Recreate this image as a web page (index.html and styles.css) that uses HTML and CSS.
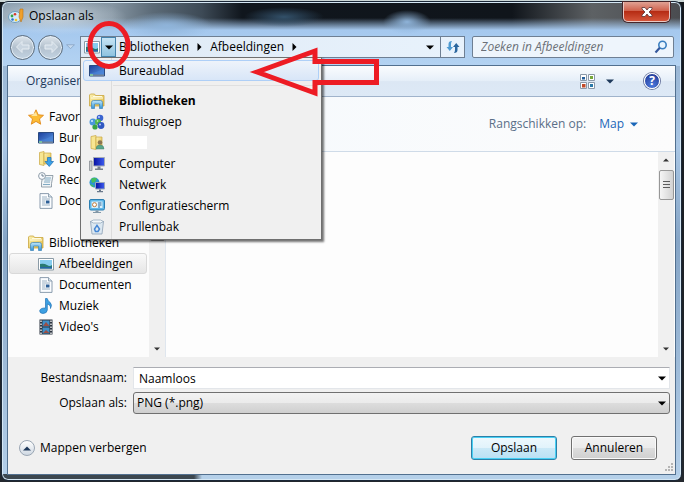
FILE: index.html
```html
<!DOCTYPE html>
<html lang="nl">
<head>
  <meta charset="utf-8">
  <title>Opslaan als</title>
  <link rel="stylesheet" href="styles.css">
</head>

<body>
  <svg class="symbols" aria-hidden="true">
    <defs>
      <linearGradient id="g-folder" x1="0" y1="0" x2="1" y2="1">
        <stop offset="0" stop-color="#fdf3b4"/><stop offset="1" stop-color="#e2b93e"/>
      </linearGradient>
      <linearGradient id="g-blue" x1="0" y1="0" x2="1" y2="1">
        <stop offset="0" stop-color="#1c3f9c"/><stop offset="1" stop-color="#5b9be6"/>
      </linearGradient>
      <linearGradient id="g-sky" x1="0" y1="0" x2="0" y2="1">
        <stop offset="0" stop-color="#bfe6fb"/><stop offset="1" stop-color="#2f93d6"/>
      </linearGradient>
      <linearGradient id="g-screen" x1="0" y1="0" x2="1" y2="0">
        <stop offset="0" stop-color="#0610a0"/><stop offset="1" stop-color="#3d5df0"/>
      </linearGradient>
    </defs>
    <symbol id="i-paint" viewBox="0 0 16 16">
      <ellipse cx="7" cy="9" rx="6.5" ry="5.5" fill="#d4ebf8" stroke="#6f9fc0"/>
      <circle cx="4" cy="8" r="1.4" fill="#37a345"/><circle cx="7" cy="6.300" r="1.300" fill="#d93b2b"/>
      <circle cx="4.500" cy="11.500" r="1.300" fill="#2a6fd0"/><circle cx="8" cy="12" r="1.300" fill="#f0c22c"/>
      <path d="M12 1h3v8l-2 5-2-5z" fill="#f0a02c" stroke="#b8731a" stroke-width=".6"/>
    </symbol>
    <symbol id="i-desktop" viewBox="0 0 16 16">
      <path d="M.5 2.500h15v10.500H.5z" fill="url(#g-blue)" stroke="#2a4a80"/>
      <path d="M1 10c4 0 8-1 14-5v7H1z" fill="#4b86d8" opacity=".6"/>
      <path d="M1 11.500h14v1.500H1z" fill="#6f8096"/><path d="M1 11h3v2H1z" fill="#7cc0a0"/>
    </symbol>
    <symbol id="i-library" viewBox="0 0 16 16">
      <path d="M.5 13V2l1-1h4l1 1.500h8.500V13z" fill="url(#g-folder)" stroke="#c9a640" stroke-width=".8"/>
      <path d="M2 5h12M4 3.500h9" stroke="#fffbe0"/>
      <path d="M2.500 15.500V9.500q0-2 2-2h7q2 0 2 2v6h-3v-4.500H5.500v4.500z" fill="url(#g-sky)" stroke="#3d84b8" stroke-width=".7"/>
    </symbol>
    <symbol id="i-homegroup" viewBox="0 0 16 16">
      <circle cx="11" cy="4" r="3.300" fill="#3a64d0"/><circle cx="4" cy="8" r="3.500" fill="#4b97dc"/>
      <circle cx="9" cy="8" r="3" fill="#54b949"/><circle cx="6" cy="13" r="2.600" fill="#38a244"/>
      <circle cx="12" cy="11.500" r="3.400" fill="#2f58c2"/>
      <circle cx="10" cy="3" r="1" fill="#b9d0ff"/><circle cx="3" cy="7" r="1" fill="#d3ecff"/>
      <circle cx="11" cy="10.500" r="1" fill="#b9d0ff"/><circle cx="8.500" cy="7" r=".8" fill="#d5f6c8"/>
    </symbol>
    <symbol id="i-user" viewBox="0 0 16 16">
      <path d="M2 1.500 7 .5v14l-5-1z" fill="#f7e692" stroke="#c9a640" stroke-width=".7"/>
      <path d="M7 2h6v11H7z" fill="url(#g-folder)" stroke="#c9a640" stroke-width=".7"/>
      <circle cx="11" cy="7.500" r="2.300" fill="#8b7451"/><path d="M7 14q0-4 4-4t4 4z" fill="#58a68a" stroke="#47816c" stroke-width=".5"/>
    </symbol>
    <symbol id="i-computer" viewBox="0 0 16 16">
      <path d="M.5 5h2.500v9.500H.5z" fill="#c8ccd0" stroke="#7d8388" stroke-width=".7"/>
      <path d="M4.500 1.500h11v8.500h-11z" fill="url(#g-screen)" stroke="#a7adb5"/>
      <path d="M8.500 10.500h3v2h-3zM6 12.500h8v1.500H6z" fill="#77808c"/>
    </symbol>
    <symbol id="i-network" viewBox="0 0 16 16">
      <circle cx="5.500" cy="5.500" r="5" fill="#2a94d2"/><path d="M2 2q3-2 6-.5L6 5 3 6zM1 7l3 1 1 2.500Q2 10 1 7z" fill="#46bd5c"/>
      <path d="M6.500 5.500h9v6.500h-9z" fill="url(#g-screen)" stroke="#9ba8bb"/>
      <path d="M10 12.500h2v1.500h-2zM8 14h6v1.200H8z" fill="#69788a"/>
    </symbol>
    <symbol id="i-control" viewBox="0 0 16 16">
      <rect x=".5" y="1.500" width="15" height="10.500" rx="1.500" fill="#5fb6e8" stroke="#2c7fb2"/>
      <path d="M2.500 3.500h11V10h-11z" fill="#d9f1fc"/>
      <circle cx="5.500" cy="6.700" r="2" fill="#fff" stroke="#c07b3d"/><path d="M9 5h3.500M9 7h3.500M9 9h2" stroke="#2464a0"/>
      <path d="M6.500 12.500h3V14h-3zM4 14h8v1H4z" fill="#8398a8"/>
    </symbol>
    <symbol id="i-bin" viewBox="0 0 16 16">
      <path d="M1.500 2.500h13L13 15H3z" fill="#dce8f1" stroke="#8ba0b5" stroke-width=".8"/>
      <path d="m1.500 2.500 3-1.500h7l3 1.500-3 1.500h-7z" fill="#f4f8fb" stroke="#8ba0b5" stroke-width=".7"/>
      <path d="M8 6.300 10.500 10 9 12.500H6.500L5.500 10z" fill="none" stroke="#4586d4" stroke-width="1.500"/>
    </symbol>
    <symbol id="i-star" viewBox="0 0 16 16">
      <path d="m8 .8 2.200 5 5.300.5-4 3.600 1.200 5.300L8 12.400l-4.700 2.800 1.200-5.300-4-3.600 5.300-.5z" fill="#fcbc35" stroke="#e18a1c" stroke-width=".9"/>
      <path d="m8 3 1.300 4H3z" fill="#ffe59a"/>
    </symbol>
    <symbol id="i-download" viewBox="0 0 16 16">
      <path d="M1.500 1.500 6 .5v14l-4.500-1z" fill="#f7e692" stroke="#c9a640" stroke-width=".7"/>
      <path d="M6 2h7v11H6z" fill="url(#g-folder)" stroke="#c9a640" stroke-width=".7"/>
      <path d="M9.500 6.500h3.500v4h2.500l-4.250 5L7 10.500h2.500z" fill="#3ba1e8" stroke="#1e70b6" stroke-width=".7"/>
    </symbol>
    <symbol id="i-recent" viewBox="0 0 16 16">
      <path d="M5 3.500h10l-1.500 8V15H3.500v-4.500z" fill="#f1f4f6" stroke="#7e8d99" stroke-width=".8"/>
      <path d="M7 6h6M6.500 8h6M6 10h6M5 12.500h7" stroke="#74a1bd" stroke-width=".9"/>
      <circle cx="4" cy="4" r="3.400" fill="#fafcff" stroke="#8e9ca8"/><path d="M4 2v2h2" fill="none" stroke="#526879" stroke-width=".8"/>
    </symbol>
    <symbol id="i-document" viewBox="0 0 16 16">
      <path d="M2 .6h8.500L14 4v11.400H2z" fill="#fbfdff" stroke="#7f92a5" stroke-width=".9"/>
      <path d="M10.500.6V4H14" fill="#d9e4ec" stroke="#7f92a5" stroke-width=".8"/>
      <path d="M4 4h5M4 6h8M4 8h3.500M4 10h3.500M4 12h8" stroke="#8fa7bb" stroke-width=".9"/><path d="M8 7.500h3.500v3H8z" fill="#2d5f96"/>
    </symbol>
    <symbol id="i-picture" viewBox="0 0 16 16">
      <path d="M.5 2.500h15v11.500H.5z" fill="#fff" stroke="#8b9ba6"/>
      <path d="M2 4h12v8.500H2z" fill="#87cdef"/><path d="M2 8q4-1 7 1t5 0v3.500H2z" fill="#2a7b72"/><path d="M2 11h12v1.500H2z" fill="#2765a7"/>
    </symbol>
    <symbol id="i-music" viewBox="0 0 16 16">
      <path d="M7.500.5h1.700q.5 2.500 3 4 2.300 2.500.3 6 .5-3.500-3.200-4.500v6q-.2 3.300-4.300 3.500-3.500-.2-3.300-2.700.6-3 5.800-2.800z" fill="#3da0e2" stroke="#2272b6" stroke-width=".7"/>
    </symbol>
    <symbol id="i-video" viewBox="0 0 16 16">
      <path d="M1.500.5h13v15h-13z" fill="#2c3540"/><path d="M4.500 1.500h7v6h-7zM4.500 8.500h7v6h-7z" fill="#3f8fc8"/>
      <path d="m5 7 3-4 3.500 4zM5 14l3-3 3.500 3z" fill="#9b4f45"/>
      <path d="M3 1.500v14M13 1.500v14" stroke="#fff" stroke-width="1.300" stroke-dasharray="1.500 1.500"/>
    </symbol>
    <symbol id="i-down" viewBox="0 0 8 5">
      <path d="M0 .5h8L4 4.500z" fill="currentColor"/>
    </symbol>
    <symbol id="i-right" viewBox="0 0 5 8">
      <path d="M.5 0v8l4-4z" fill="currentColor"/>
    </symbol>
  </svg>

  <main class="window">
    <header class="titlebar">
      <svg class="icon"><use href="#i-paint"/></svg>
      <h1>Opslaan als</h1>
      <button class="close" type="button" aria-label="Sluiten">
        <svg viewBox="0 0 12 10"><path d="M1 .5h3L6 3 8 .5h3v1.500L8 5l3 3v1.500H8L6 7 4 9.500H1V8l3-3-3-3z" fill="#fff" stroke="#5b3436" stroke-width=".8"/></svg>
      </button>
    </header>

    <div class="navbar">
      <button class="round" type="button" aria-label="Terug">
        <svg viewBox="0 0 16 16"><path d="M7 2.500 1.500 8 7 13.500V10h7V6H7z"/></svg>
      </button>
      <button class="round" type="button" aria-label="Vooruit">
        <svg viewBox="0 0 16 16"><path d="M9 2.500 14.500 8 9 13.500V10H2V6h7z"/></svg>
      </button>
      <svg class="recent-arrow" viewBox="0 0 8 5"><path d="M.5.5h7L4 4z" fill="#c5daef" stroke="#8aa6c6" stroke-width=".8"/></svg>

      <div class="address">
        <svg class="icon"><use href="#i-picture"/></svg>
        <button class="places" type="button" aria-label="Locaties"><svg class="down"><use href="#i-down"/></svg></button>
        <a href="#">Bibliotheken</a>
        <svg class="right"><use href="#i-right"/></svg>
        <a href="#">Afbeeldingen</a>
        <svg class="right"><use href="#i-right"/></svg>
        <button class="history" type="button" aria-label="Vorige locaties"><svg class="down"><use href="#i-down"/></svg></button>
        <button class="refresh" type="button" aria-label="Vernieuwen">
          <svg viewBox="0 0 14 14"><path d="M6 1Q2.500 1 2.500 4v3H.5l3.300 4L7 7H5V4q0-1.500 1-3z" fill="#4f9bd2"/><path d="M8 13q3.500 0 3.500-3V7h2l-3.300-4L7 7h2v3q0 1.500-1 3z" fill="#2b669e"/></svg>
        </button>

        <ul class="menu">
          <li class="active"><a href="#"><svg class="icon"><use href="#i-desktop"/></svg>Bureaublad</a></li>
          <li class="separator"></li>
          <li class="current"><a href="#"><svg class="icon"><use href="#i-library"/></svg>Bibliotheken</a></li>
          <li><a href="#"><svg class="icon"><use href="#i-homegroup"/></svg>Thuisgroep</a></li>
          <li><a href="#" aria-label="Gebruiker"><svg class="icon"><use href="#i-user"/></svg><span class="blank"></span></a></li>
          <li><a href="#"><svg class="icon"><use href="#i-computer"/></svg>Computer</a></li>
          <li><a href="#"><svg class="icon"><use href="#i-network"/></svg>Netwerk</a></li>
          <li><a href="#"><svg class="icon"><use href="#i-control"/></svg>Configuratiescherm</a></li>
          <li><a href="#"><svg class="icon"><use href="#i-bin"/></svg>Prullenbak</a></li>
        </ul>
      </div>

      <div class="search">
        <input type="search" placeholder="Zoeken in Afbeeldingen" aria-label="Zoeken in Afbeeldingen">
        <svg viewBox="0 0 14 14"><circle cx="8.500" cy="5" r="3.700" fill="#e8f5ff" stroke="#3b7fc0" stroke-width="1.600"/><path d="M5.800 7.800 1.500 12.500" stroke="#35589c" stroke-width="2.200"/></svg>
      </div>
    </div>

    <div class="client">
      <div class="toolbar">
        <button type="button">Organiseren</button>
        <button class="view" type="button" aria-label="Weergave">
          <svg class="tiles" viewBox="0 0 15 15">
            <path d="M.5.5h6v6h-6zM8.500.5h6v6h-6zM.5 8.500h6v6h-6zM8.500 8.500h6v6h-6z" fill="#fff" stroke="#8a98a8"/>
            <path d="M2 3h3v2.500H2z" fill="#245f9c"/><path d="M10 2h3v3h-3z" fill="#76a83b"/><path d="M2 10h3.500v3.500H2z" fill="#c34a28"/><path d="M10 10h3v3h-3z" fill="#2b79a8"/>
          </svg>
          <svg class="down"><use href="#i-down"/></svg>
        </button>
        <button class="help" type="button" aria-label="Help">?</button>
      </div>

      <div class="panes">
        <nav class="sidebar">
          <a class="group" href="#"><svg class="icon"><use href="#i-star"/></svg>Favorieten</a>
          <a href="#"><svg class="icon"><use href="#i-desktop"/></svg>Bureaublad</a>
          <a href="#"><svg class="icon"><use href="#i-download"/></svg>Downloads</a>
          <a href="#"><svg class="icon"><use href="#i-recent"/></svg>Recent</a>
          <a href="#"><svg class="icon"><use href="#i-document"/></svg>Documenten</a>
          <a class="group" href="#"><svg class="icon"><use href="#i-library"/></svg>Bibliotheken</a>
          <a class="selected" href="#"><svg class="icon"><use href="#i-picture"/></svg>Afbeeldingen</a>
          <a href="#"><svg class="icon"><use href="#i-document"/></svg>Documenten</a>
          <a href="#"><svg class="icon"><use href="#i-music"/></svg>Muziek</a>
          <a href="#"><svg class="icon"><use href="#i-video"/></svg>Video's</a>
        </nav>
        <div class="scrollbar side">
          <span class="thumb"></span>
          <svg class="down"><use href="#i-down"/></svg>
        </div>
        <section class="content">
          <div class="arrange">
            <span>Rangschikken op:</span>
            <button type="button">Map <svg class="down"><use href="#i-down"/></svg></button>
          </div>
          <div class="files">
            <div class="scrollbar">
              <svg class="down up"><use href="#i-down"/></svg>
              <span class="thumb"><i></i></span>
              <svg class="down"><use href="#i-down"/></svg>
            </div>
          </div>
        </section>
      </div>

      <form class="footer">
        <div class="field">
          <label for="filename">Bestandsnaam:</label>
          <div class="combo">
            <input id="filename" type="text" value="Naamloos">
            <svg class="down"><use href="#i-down"/></svg>
          </div>
        </div>
        <div class="field">
          <label for="filetype">Opslaan als:</label>
          <div class="combo">
            <select id="filetype"><option>PNG (*.png)</option></select>
            <svg class="down"><use href="#i-down"/></svg>
          </div>
        </div>
        <div class="actions">
          <button class="hide" type="button"><span class="disc"><svg class="down up"><use href="#i-down"/></svg></span>Mappen verbergen</button>
          <button class="push default" type="button">Opslaan</button>
          <button class="push" type="button">Annuleren</button>
        </div>
        <svg class="grip" viewBox="0 0 9 9"><path d="M7 1h2M4 4h2M7 4h2M1 7h2M4 7h2M7 7h2" stroke="#b5b5b5" stroke-width="2"/></svg>
      </form>
    </div>
  </main>

  <!-- red marks drawn over the dialog -->
  <svg class="marks" width="400" height="110" aria-hidden="true">
    <ellipse cx="109" cy="45" rx="19" ry="21.500"/>
    <path d="M257 72 315 51V61.500H376.500V82.500H315V93z"/>
  </svg>
</body>
</html>
```

FILE: styles.css
```css
* {
  box-sizing: border-box;
}

body {
  margin: 0;
  padding: 1px 2px 1px 1px;
  min-height: 100vh;
  display: flex;
  background: linear-gradient(#cbd6d6 2px, #14181d 2px, #23282e);
  font: 12px/20px "Open Sans", "Noto Sans", sans-serif;
  color: #000;
}

button, input, select {
  font: inherit;
  color: inherit;
  margin: 0;
  padding: 0;
  border: 0;
  background: none;
}

a {
  color: inherit;
  text-decoration: none;
}

svg {
  display: block;
  flex: none;
}

.symbols {
  position: absolute;
  width: 0;
  height: 0;
}

.icon {
  width: 16px;
  height: 16px;
}

.down {
  width: 8px;
  height: 5px;
}

.up {
  transform: rotate(180deg);
}

.right {
  width: 5px;
  height: 8px;
}

.window {
  flex: 1;
  display: flex;
  flex-direction: column;
  padding: 0 5px 5px;
  border: 1px solid #1b2838;
  border-radius: 7px;
  box-shadow: inset 0 0 0 1px #d5e7f4;
  background:
    radial-gradient(ellipse 70px 18px at 55px 15px, rgba(215, 226, 235, .8), transparent) no-repeat,
    radial-gradient(ellipse 45px 14px at 165px 24px, #8fb4da, transparent) no-repeat,
    radial-gradient(ellipse 24px 12px at 405px 20px, #8fb4da, transparent) no-repeat,
    radial-gradient(ellipse 40px 10px at 282px 15px, #33516a, transparent) no-repeat,
    linear-gradient(to bottom, transparent 16px, #a5c8ee 28px, #b4d3f2 64px, transparent 64px),
    linear-gradient(to right, #8fa2b2 0, #8595a2 110px, #5c6b78 150px, #3d4a56 200px, #10161d 240px, #10151b 510px, #5d6164 590px, #4a4c50) top / 100% 40px no-repeat,
    linear-gradient(to right, #3c474f 192px, #b5d0e9 200px) bottom / 100% 6px no-repeat,
    linear-gradient(#8fabc9, #a9c6e4 30%, #86a5c6 50%, #b4cfe9);
}

/* title bar */
.titlebar {
  height: 32px;
  padding: 0 6px 4px 1px;
  display: flex;
  align-items: center;
  gap: 5px;
}

.titlebar h1 {
  flex: 1;
  margin: 0;
  font-size: 12px;
  font-weight: normal;
}

.close {
  align-self: flex-start;
  width: 47px;
  height: 20px;
  display: flex;
  align-items: center;
  justify-content: center;
  border: 1px solid #e9c9c4;
  border-top: 0;
  border-radius: 0 0 5px 5px;
  background: linear-gradient(#e0a294, #cf5f4a 48%, #b62c14 50%, #d4553a);
  box-shadow: 0 0 0 1px #47262a;
}

.close svg {
  width: 12px;
  height: 10px;
}

/* address and search */
.navbar {
  display: flex;
  align-items: center;
  height: 31px;
  padding: 0 2px 5px 3px;
}

.round {
  width: 25px;
  height: 25px;
  flex: none;
  margin-right: 3px;
  display: flex;
  align-items: center;
  justify-content: center;
  border: 1px solid #5c6c7c;
  border-radius: 50%;
  background: linear-gradient(#dfe6ec, #b3c1ce 50%, #c3d3e2);
  box-shadow: inset 0 0 0 1px #e3edf6;
}

.round svg {
  width: 16px;
  height: 16px;
  fill: #c9d5e0;
  stroke: #e6edf3;
}

.recent-arrow {
  width: 9px;
  height: 6px;
  margin-right: 5px;
}

.address {
  flex: 1;
  height: 22px;
  position: relative;
  display: flex;
  align-items: center;
  padding-left: 3px;
  border: 1px solid #6e7f93;
  background: linear-gradient(to right, #dfeaf5, #e8f2fc);
}

.address > .right {
  margin: 0 8px;
}

.places {
  width: 15px;
  height: 20px;
  margin: 0 3px 0 1px;
  display: flex;
  align-items: center;
  justify-content: center;
  border: 1px solid #4584ad;
  background: linear-gradient(#c6e4f5, #8fc3e0);
}

.history {
  margin-left: auto;
  padding: 0 6px;
}

.refresh {
  width: 24px;
  height: 20px;
  display: flex;
  align-items: center;
  justify-content: center;
  border-left: 1px solid #6e7f93;
}

.refresh svg {
  width: 14px;
  height: 14px;
}

.search {
  width: 202px;
  height: 22px;
  margin-left: 7px;
  padding: 0 5px 0 8px;
  display: flex;
  align-items: center;
  border: 1px solid #6e7f93;
  border-radius: 2px;
  background: #eef5fc;
}

.search input {
  flex: 1;
  min-width: 0;
  outline: 0;
}

.search input::placeholder {
  color: #6b7077;
  font-style: italic;
}

.search svg {
  width: 14px;
  height: 14px;
}

/* drop-down list under the address bar */
.menu {
  position: absolute;
  z-index: 1;
  top: 20px;
  left: -1px;
  width: 242px;
  margin: 0;
  padding: 2px;
  list-style: none;
  border: 1px solid #6f6f6f;
  background: linear-gradient(to right, #f0f0f0 30px, #dcdcdc 30px, #dcdcdc 31px, #f0f0f0 31px);
  box-shadow: 2px 2px 2px rgba(0, 0, 0, .55);
}

.menu a {
  height: 21px;
  display: flex;
  align-items: center;
  gap: 14px;
  padding-left: 6px;
}

.menu .active a {
  border: 1px solid #aecff7;
  border-radius: 3px;
  padding-left: 5px;
  background: linear-gradient(#eef3fa, #d8e6f8);
}

.menu .separator {
  height: 1px;
  margin: 4px 0 4px 30px;
  background: #e0e0e0;
}

.menu .current {
  font-weight: bold;
}

.menu .blank {
  width: 30px;
  height: 13px;
  margin-left: -2px;
  background: #fff;
}

/* client area */
.client {
  flex: 1;
  display: flex;
  flex-direction: column;
  border: 1px solid #52708f;
  background: #f0f0f0;
}

.toolbar {
  height: 31px;
  display: flex;
  align-items: center;
  padding: 0 15px 0 18px;
  color: #1e395b;
  border-bottom: 1px solid #a0b3cb;
  background: linear-gradient(#fafcfe, #e6eff9 48%, #dce7f4 52%, #dde9f6);
}

.view {
  margin-left: auto;
  display: flex;
  align-items: center;
  gap: 11px;
}

.tiles {
  width: 15px;
  height: 15px;
}

.help {
  width: 16px;
  height: 16px;
  margin-left: 30px;
  font-size: 12px;
  font-weight: bold;
  line-height: 12px;
  color: #fff;
  border: 1px solid #fff;
  border-radius: 50%;
  background: radial-gradient(circle at 50% 80%, #4d79dc, #1c338f);
  box-shadow: 0 0 0 1px #6e7ba2;
}

.panes {
  flex: 1;
  display: flex;
  background: #fcfcfc;
}

.sidebar {
  width: 141px;
  padding: 9px 2px 0 1px;
}

.sidebar a {
  height: 21px;
  display: flex;
  align-items: center;
  gap: 5px;
  padding-left: 28px;
  border: 1px solid transparent;
  border-radius: 3px;
}

.sidebar .group {
  padding-left: 18px;
}

.sidebar a + .group {
  margin-top: 21px;
}

.sidebar .selected {
  border-color: #d9d9d9;
  background: linear-gradient(#f9f9f9, #e6e6e6);
}

.scrollbar {
  width: 16px;
  padding: 6px 0;
  display: flex;
  flex-direction: column;
  align-items: center;
  color: #333;
  background: #f0f0f0;
}

.scrollbar .down {
  width: 6px;
  height: 4px;
  margin-top: auto;
}

.scrollbar .up {
  margin-top: 0;
}

.thumb {
  width: 15px;
  height: 30px;
  margin-top: 8px;
  display: flex;
  align-items: center;
  justify-content: center;
  border: 1px solid #979797;
  border-radius: 2px;
  background: linear-gradient(to right, #f5f5f5, #d2d2d2);
}

.thumb i {
  width: 7px;
  height: 8px;
  background: repeating-linear-gradient(#5c5c5c 0 1px, transparent 1px 3px);
}

.side .thumb {
  height: 130px;
}

.content {
  flex: 1;
  display: flex;
  flex-direction: column;
  border-left: 1px solid #dfe6ee;
}

.arrange {
  height: 55px;
  display: flex;
  align-items: center;
  justify-content: flex-end;
  gap: 13px;
  padding-right: 37px;
  color: #5a6f88;
  border-bottom: 1px solid #cfdbe8;
  background: linear-gradient(to right, #f5f9fd, #fcfcfc);
}

.arrange button {
  display: flex;
  align-items: center;
  gap: 6px;
  color: #1a66b8;
}

.files {
  flex: 1;
  display: flex;
  justify-content: flex-end;
  padding-right: 1px;
  background: #fdfdfd;
}

/* file name, type and buttons */
.footer {
  position: relative;
  padding: 10px 5px 14px;
}

.field {
  display: flex;
  align-items: center;
  margin-bottom: 3px;
}

.field label {
  width: 114px;
  margin-right: 6px;
  text-align: right;
}

.combo {
  flex: 1;
  display: flex;
  align-items: center;
  position: relative;
}

.combo input,
.combo select {
  width: 100%;
  height: 22px;
  appearance: none;
  outline: 0;
}

.combo input {
  padding: 0 5px;
  border: 1px solid #e3e6ea;
  border-top-color: #abadb3;
  background: #fff;
}

.combo select {
  padding: 0 3px;
  border: 1px solid #707070;
  border-radius: 3px;
  background: linear-gradient(#f2f2f2, #ebebeb 48%, #dddddd 50%, #cfcfcf);
}

.combo .down {
  position: absolute;
  right: 4px;
}

.actions {
  display: flex;
  align-items: center;
  margin-top: 22px;
  padding-right: 13px;
}

.hide {
  margin-right: auto;
  padding-left: 6px;
  display: flex;
  align-items: center;
  gap: 5px;
}

.disc {
  width: 16px;
  height: 16px;
  display: flex;
  align-items: center;
  justify-content: center;
  color: #1e395b;
  border: 1px solid #9aa6b4;
  border-radius: 50%;
  background: linear-gradient(#fff, #cfd8e2);
}

.push {
  width: 86px;
  height: 24px;
  margin-left: 14px;
  border: 1px solid #707070;
  border-radius: 3px;
  background: linear-gradient(#f2f2f2, #ebebeb 48%, #dddddd 50%, #cfcfcf);
  box-shadow: inset 0 0 0 1px #fafafa;
}

.default {
  border-color: #2c7fa8;
  background: linear-gradient(#eef8fd, #e2f3fb 48%, #cbe9f7 50%, #b9e0f4);
  box-shadow: inset 0 0 0 1px #48d0f4;
}

.grip {
  position: absolute;
  right: 2px;
  bottom: 2px;
  width: 9px;
  height: 9px;
}

.marks {
  position: absolute;
  z-index: 2;
  top: 0;
  left: 0;
  fill: none;
  stroke: #ed1c24;
  stroke-width: 5;
  pointer-events: none;
}
```
